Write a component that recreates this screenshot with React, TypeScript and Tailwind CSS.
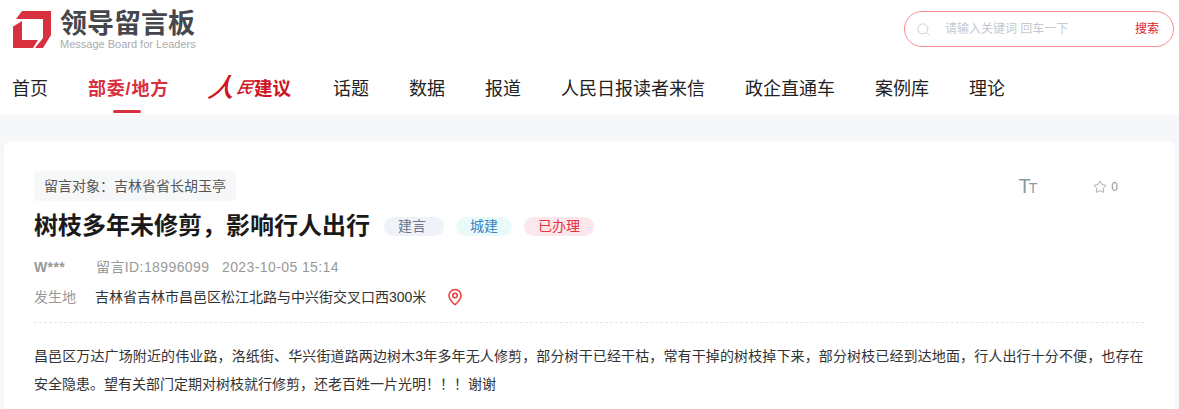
import { Search, Star, MapPin } from "lucide-react";

const font = { fontFamily: '"Liberation Sans", "Noto Sans CJK SC", sans-serif' };

const navItems = [
  { label: "话题", width: "w-[36px]" },
  { label: "数据", width: "w-[36px]" },
  { label: "报道", width: "w-[36px]" },
  { label: "人民日报读者来信", width: "w-[144px]" },
  { label: "政企直通车", width: "w-[90px]" },
  { label: "案例库", width: "w-[54px]" },
  { label: "理论", width: "w-[36px]" },
];

const Logo = () => {
  return (
    <div className="flex items-start gap-[9px]">
      <svg width="38" height="38" viewBox="0 0 38 38">
        <path fill="#d9303f" d="M9 0H38V24L30 37H22L30 27V8H3Z" />
        <path fill="#d9303f" d="M1 15L9 10V29H25L20 37H0V15Z" />
      </svg>
      <div className="flex flex-col">
        <span className="text-[27px] font-bold leading-[27px] text-[#44474c]">领导留言板</span>
        <span className="text-[11px] leading-[13px] text-[#a9abae]">Message Board for Leaders</span>
      </div>
    </div>
  );
};

const SearchBox = () => {
  return (
    <div className="flex h-[36px] w-[270px] items-center rounded-full border border-[#fb8b95] bg-white pl-[11px] pr-[14px]">
      <Search size={15} strokeWidth={1.5} className="text-[#c6cdd6]" />
      <span className="ml-[14px] flex-1 text-[12px] text-[#c3cad3]">请输入关键词 回车一下</span>
      <span className="text-[12px] text-[#e0202f]">搜索</span>
    </div>
  );
};

const Nav = () => {
  return (
    <nav className="mt-[23px] flex items-start gap-[40px] pl-[12px]">
      <a className="w-[36px] text-[18px] leading-[30px] text-[#222]">首页</a>
      <a className="relative h-[39px] w-[81px] text-[18px] font-bold leading-[30px] tracking-[0.8px] text-[#d9303f]">
        部委/地方
        <span className="absolute bottom-0 left-[25px] h-[3px] w-[28px] rounded-full bg-[#d9303f]" />
      </a>
      <a className="-ml-[1px] -mt-[3px] flex h-[33px] w-[85px] items-center whitespace-nowrap text-[#cf1322]">
        <span className="ml-[1px] mr-[2px] shrink-0 -skew-x-12 text-[26px] font-medium italic leading-[30px]">人</span>
        <span className="shrink-0 -skew-x-12 text-[16px] font-medium italic leading-[30px]">民</span>
        <span className="ml-[1px] mt-[3px] shrink-0 text-[18.5px] font-bold leading-[30px]">建议</span>
      </a>
      {navItems.map((item) => {
        return (
          <a key={item.label} className={`${item.width} text-[18px] leading-[30px] text-[#222]`}>
            {item.label}
          </a>
        );
      })}
    </nav>
  );
};

const Tag = ({ label, className }: { label: string; className: string }) => {
  return (
    <span className={`flex h-[19px] items-center justify-center rounded-full text-[14px] ${className}`}>
      {label}
    </span>
  );
};

export default function App() {
  return (
    <div className="h-[409px] w-[1179px] overflow-hidden bg-[#f6f7f9]" style={font}>
      <header className="h-[115px] bg-white">
        <div className="flex items-start justify-between pl-[13px] pr-[5px] pt-[11px]">
          <Logo />
          <SearchBox />
        </div>
        <Nav />
      </header>

      <main className="px-[4px] pt-[26px]">
        <section className="h-[300px] rounded-[8px] bg-white pl-[30px] pr-[31px] pt-[30px]">
          <div className="flex items-start justify-between">
            <div className="flex h-[30px] items-center rounded-[3px] bg-[#f6f7f9] px-[10px] text-[14px] text-[#555]">
              留言对象：吉林省省长胡玉亭
            </div>
            <div className="flex items-center pr-[26px] pt-[4px]">
              <span className="flex items-baseline text-[#8a9a9c]">
                <span className="text-[20px] leading-[23px]">T</span>
                <span className="-ml-[2px] text-[14px] leading-[15px]">T</span>
              </span>
              <span className="ml-[56px] flex items-center gap-[4px] text-[12px] text-[#8d949c]">
                <Star size={14} strokeWidth={1.3} />
                0
              </span>
            </div>
          </div>

          <div className="mt-[7px] flex items-center">
            <h1 className="text-[24px] font-bold leading-[36px] text-[#1a1a1a]">
              树枝多年未修剪，影响行人出行
            </h1>
            <div className="ml-[14px] flex items-center gap-[12px]">
              <Tag label="建言" className="w-[60px] bg-[#eff2f8] pr-[4px] text-[#6d7689]" />
              <Tag label="城建" className="w-[56px] bg-[#e9faf8] text-[#3b82c4]" />
              <Tag label="已办理" className="w-[70px] bg-[#fce8ec] text-[#e8303f]" />
            </div>
          </div>

          <div className="mt-[13px] flex items-center text-[14px] leading-[20px] tracking-[0.4px] text-[#999]">
            <span className="w-[62px] font-bold">W***</span>
            <span className="w-[126px]">留言ID:18996099</span>
            <span>2023-10-05 15:14</span>
          </div>

          <div className="mt-[10px] flex items-center text-[14px] leading-[20px]">
            <span className="w-[61px] text-[#999]">发生地</span>
            <span className="text-[#333]">吉林省吉林市昌邑区松江北路与中兴街交叉口西300米</span>
            <MapPin size={18} strokeWidth={2} className="ml-[20px] text-[#ef3b3b]" />
          </div>

          <div className="mt-[15px] border-t border-dashed border-[#e4e6e9]" />

          <p className="mt-[19px] text-[14px] leading-[28px] text-[#333]">
            <span className="tracking-[0.125px]">
              昌邑区万达广场附近的伟业路，洛纸街、华兴街道路两边树木3年多年无人修剪，部分树干已经干枯，常有干掉的树枝掉下来，部分树枝已经到达地面，行人出行十分不便，也存在
            </span>
            安全隐患。望有关部门定期对树枝就行修剪，还老百姓一片光明！！！谢谢
          </p>
        </section>
      </main>
    </div>
  );
}
